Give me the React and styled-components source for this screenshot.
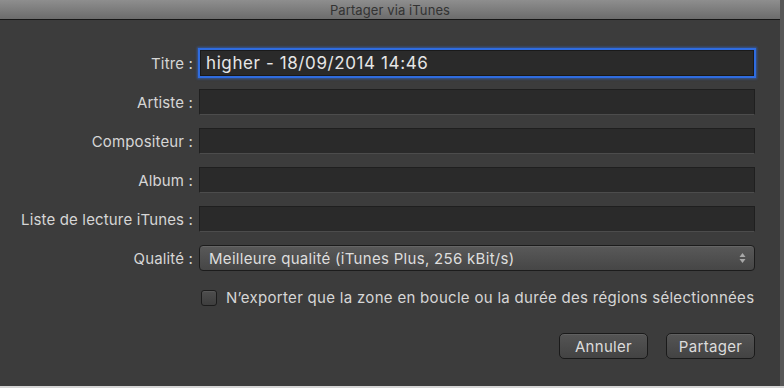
import React from "react";
import styled, { createGlobalStyle } from "styled-components";

const Global = createGlobalStyle`
  html, body { margin: 0; padding: 0; background: #d6d6d6; }
  body { font-family: Inter, "Liberation Sans", sans-serif; }
`;

const Window = styled.div`
  width: 780px;
  height: 386px;
  background: #3c3c3c;
  border-right: 4px solid #575757;
  display: flex;
  flex-direction: column;
  overflow: hidden;
`;

const TitleBar = styled.div`
  height: 19px;
  flex: none;
  background: linear-gradient(#8e8e8e, #6c6c6c);
  border-bottom: 1px solid #161616;
  display: flex;
  align-items: center;
  justify-content: center;
  font-size: 13px;
  color: #333;
  letter-spacing: 0.1px;
`;

const Body = styled.div`
  flex: 1;
  padding: 29px 25px 0 0;
  display: flex;
  flex-direction: column;
`;

const Form = styled.div`
  display: grid;
  grid-template-columns: 193px 1fr;
  column-gap: 6px;
  row-gap: 11px;
  align-items: center;
`;

const Label = styled.label`
  text-align: right;
  font-size: 15px;
  letter-spacing: 0.15px;
  color: #d6d6d6;
  white-space: nowrap;
`;

const Field = styled.div`
  height: 26px;
  box-sizing: border-box;
  background: #2a2a2a;
  border: 1px solid #1f1f1f;
  border-bottom-color: #4c4c4c;
  padding: 0 5px;
  display: flex;
  align-items: center;
  font-size: 17px;
  letter-spacing: 0.6px;
  color: #e6e6e6;
  margin: ${(p) => (p.$focused ? "1px 1px" : "1px 0")};
  ${(p) =>
    p.$focused &&
    `
    border: 1px solid #1a1a1a;
    box-shadow: 0 0 0 2px #2f6ce0, 0 0 2px 3px rgba(47,108,224,0.55);
  `}
`;

const Popup = styled.div`
  height: 26px;
  box-sizing: border-box;
  margin: 1px 0;
  border: 1px solid #1c1c1c;
  border-radius: 4px;
  background: linear-gradient(#595959, #464646);
  box-shadow: inset 0 1px 0 rgba(255, 255, 255, 0.08);
  padding: 0 8px 0 9px;
  display: flex;
  align-items: center;
  justify-content: space-between;
  font-size: 15px;
  letter-spacing: 0.3px;
  color: #dedede;
`;

const CheckRow = styled.div`
  grid-column: 2;
  display: flex;
  align-items: center;
  gap: 9px;
  margin-top: 5px;
  padding-left: 2px;
  font-size: 15px;
  letter-spacing: 0.3px;
  color: #d6d6d6;
  white-space: nowrap;
`;

const Box = styled.span`
  width: 16px;
  height: 16px;
  box-sizing: border-box;
  border: 1px solid #1c1c1c;
  border-radius: 3px;
  background: linear-gradient(#4e4e4e, #3e3e3e);
  box-shadow: inset 0 1px 0 rgba(255, 255, 255, 0.06);
  flex: none;
`;

const Buttons = styled.div`
  margin-top: 26px;
  display: flex;
  justify-content: flex-end;
  gap: 18px;
`;

const Button = styled.button`
  width: 89px;
  height: 26px;
  box-sizing: border-box;
  border: 1px solid #1a1a1a;
  border-radius: 5px;
  background: linear-gradient(#545454, #434343);
  box-shadow: inset 0 1px 0 rgba(255, 255, 255, 0.07);
  font-family: inherit;
  font-size: 15px;
  letter-spacing: 0.3px;
  color: #dcdcdc;
  padding: 0;
`;

const Arrows = () => (
  <svg width="7" height="12" viewBox="0 0 7 12">
    <path d="M3.5 1 L6.5 5 L0.5 5 Z" fill="#a8a8a8" />
    <path d="M3.5 11 L6.5 7 L0.5 7 Z" fill="#a8a8a8" />
  </svg>
);

export default function App() {
  return (
    <>
      <Global />
      <Window>
        <TitleBar>Partager via iTunes</TitleBar>
        <Body>
          <Form>
            <Label>Titre :</Label>
            <Field $focused>higher - 18/09/2014 14:46</Field>
            <Label>Artiste :</Label>
            <Field />
            <Label>Compositeur :</Label>
            <Field />
            <Label>Album :</Label>
            <Field />
            <Label>Liste de lecture iTunes :</Label>
            <Field />
            <Label>Qualité :</Label>
            <Popup>
              <span>Meilleure qualité (iTunes Plus, 256 kBit/s)</span>
              <Arrows />
            </Popup>
            <CheckRow>
              <Box />
              <span>N’exporter que la zone en boucle ou la durée des régions sélectionnées</span>
            </CheckRow>
          </Form>
          <Buttons>
            <Button>Annuler</Button>
            <Button>Partager</Button>
          </Buttons>
        </Body>
      </Window>
    </>
  );
}
